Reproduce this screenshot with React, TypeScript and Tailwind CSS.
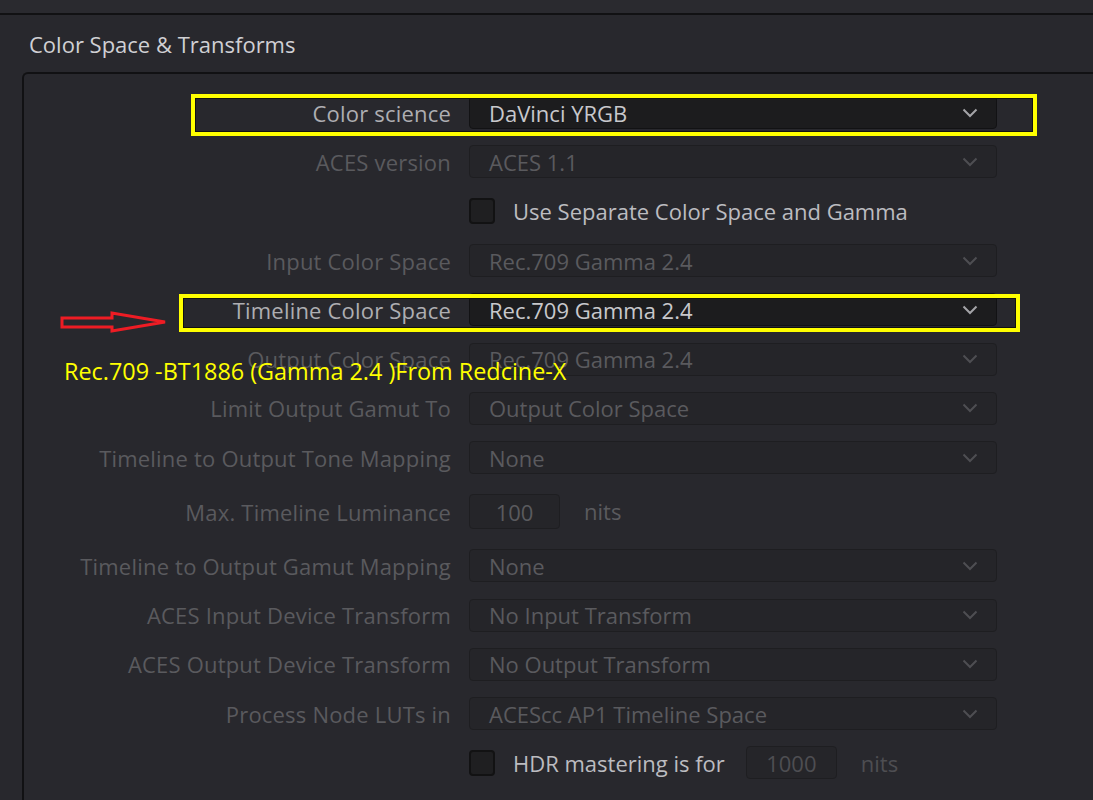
import React from 'react';

type Row =
  | { kind: 'select'; label: string; value: string; active?: boolean }
  | { kind: 'check'; text: string }
  | { kind: 'nits'; label: string; value: string }
  | { kind: 'hdr'; value: string };

const rows: Row[] = [
  { kind: 'select', label: 'Color science', value: 'DaVinci YRGB', active: true },
  { kind: 'select', label: 'ACES version', value: 'ACES 1.1' },
  { kind: 'check', text: 'Use Separate Color Space and Gamma' },
  { kind: 'select', label: 'Input Color Space', value: 'Rec.709 Gamma 2.4' },
  { kind: 'select', label: 'Timeline Color Space', value: 'Rec.709 Gamma 2.4', active: true },
  { kind: 'select', label: 'Output Color Space', value: 'Rec.709 Gamma 2.4' },
  { kind: 'select', label: 'Limit Output Gamut To', value: 'Output Color Space' },
  { kind: 'select', label: 'Timeline to Output Tone Mapping', value: 'None' },
  { kind: 'nits', label: 'Max. Timeline Luminance', value: '100' },
  { kind: 'select', label: 'Timeline to Output Gamut Mapping', value: 'None' },
  { kind: 'select', label: 'ACES Input Device Transform', value: 'No Input Transform' },
  { kind: 'select', label: 'ACES Output Device Transform', value: 'No Output Transform' },
  { kind: 'select', label: 'Process Node LUTs in', value: 'ACEScc AP1 Timeline Space' },
  { kind: 'hdr', value: '1000' },
];

const Chevron = ({ active }: { active?: boolean }) => (
  <svg width="16" height="10" viewBox="0 0 16 10" className={active ? 'text-[#a4a4a8]' : 'text-[#4e4e52]'}>
    <polyline points="1.5,1.5 8,8 14.5,1.5" fill="none" stroke="currentColor" strokeWidth="2" />
  </svg>
);

const Checkbox = () => (
  <div className="w-[26px] h-[26px] shrink-0 rounded-[4px] bg-[#1f1f21] border-2 border-[#121213]" />
);

const Label = ({ text, active }: { text: string; active?: boolean }) => (
  <div className={`text-right whitespace-nowrap tracking-[0.2px] ${active ? 'text-[#aeaeb2]' : 'text-[#5a5a5e]'}`}>{text}</div>
);

const RowView = ({ row }: { row: Row }) => {
  if (row.kind === 'select') {
    return (
      <div className="h-[49.3px] grid grid-cols-[427px_528px] gap-x-[18px] items-center">
        <Label text={row.label} active={row.active} />
        <div
          className={`h-[33px] rounded-[4px] border flex items-center justify-between pl-[19px] pr-[18px] ${
            row.active ? 'bg-[#1c1c1e] border-[#121214] text-[#c8c8cc]' : 'bg-[#252529] border-[#1e1e21] text-[#5a5a5e]'
          }`}
        >
          <span className="whitespace-nowrap">{row.value}</span>
          <Chevron active={row.active} />
        </div>
      </div>
    );
  }
  if (row.kind === 'check') {
    return (
      <div className="h-[49.3px] grid grid-cols-[427px_528px] gap-x-[18px] items-center">
        <div />
        <div className="flex items-center gap-[18px] text-[#bcbcc0]">
          <Checkbox />
          <span className="whitespace-nowrap">{row.text}</span>
        </div>
      </div>
    );
  }
  if (row.kind === 'nits') {
    return (
      <div className="h-[58.7px] grid grid-cols-[427px_528px] gap-x-[18px] items-center">
        <Label text={row.label} />
        <div className="flex items-center gap-[24px] text-[#5a5a5e]">
          <div className="w-[91px] h-[35px] rounded-[4px] border border-[#1e1e21] bg-[#252529] flex items-center justify-center">
            {row.value}
          </div>
          <span className="-mt-[2px]">nits</span>
        </div>
      </div>
    );
  }
  return (
    <div className="h-[49.3px] grid grid-cols-[427px_528px] gap-x-[18px] items-center">
      <div />
      <div className="flex items-center text-[#bcbcc0]">
        <Checkbox />
        <span className="ml-[18px] whitespace-nowrap">HDR mastering is for</span>
        <div className="ml-[21px] w-[91px] h-[33px] rounded-[4px] border border-[#1e1e21] bg-[#252529] flex items-center justify-center text-[#4e4e52]">
          {row.value}
        </div>
        <span className="ml-[24px] text-[#4e4e52]">nits</span>
      </div>
    </div>
  );
};

export default function App() {
  return (
    <div className="relative w-[1093px] h-[800px] overflow-hidden bg-[#28282d] font-['Open_Sans',sans-serif] text-[22px] leading-none">
      <div className="h-[15px] bg-[#2a2a2f] border-b-2 border-[#111113]" />
      <div className="h-[57px] flex items-center pl-[29px] pt-[1px] text-[#d0d0d4]">Color Space &amp; Transforms</div>
      <div className="ml-[22px] h-[800px] border-l-2 border-t-2 border-[#111113] rounded-tl-[6px] pt-[14px]">
        {rows.map((row, i) => (
          <RowView key={i} row={row} />
        ))}
      </div>

      {/* annotations */}
      <div className="absolute left-[191px] top-[94px] w-[846px] h-[42px] border-4 border-[#ffff00] ring-1 ring-inset ring-[#111]" />
      <div className="absolute left-[179px] top-[294px] w-[841px] h-[38px] border-4 border-[#ffff00] ring-1 ring-inset ring-[#111]" />
      <svg className="absolute left-[60px] top-[310px]" width="110" height="26" viewBox="0 0 110 26">
        <polygon points="2,8 52,8 52,3 105,12 52,21 52,17 2,17" fill="none" stroke="#ee1c24" strokeWidth="3" strokeLinejoin="miter" />
      </svg>
      <div className="absolute left-[64px] top-[360px] text-[#ffff00] text-[23.4px] whitespace-nowrap">
        Rec.709 -BT1886 (Gamma 2.4 )From Redcine-X
      </div>
    </div>
  );
}
